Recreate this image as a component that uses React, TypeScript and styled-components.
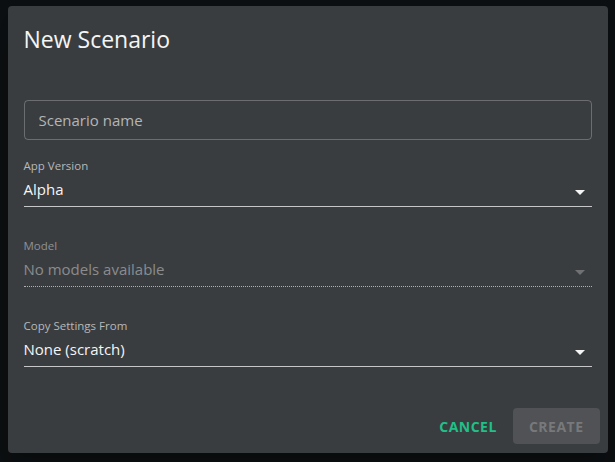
import styled, { createGlobalStyle } from "styled-components";

const GlobalStyle = createGlobalStyle`
  html, body {
    margin: 0;
    padding: 0;
    background: #0d1012;
    font-family: "Open Sans", "Liberation Sans", sans-serif;
  }
  * {
    box-sizing: border-box;
  }
`;

const Backdrop = styled.div`
  width: 100vw;
  height: 100vh;
  display: flex;
  justify-content: center;
  align-items: flex-start;
  padding-top: 6px;
  background: #0d1012;
`;

const Dialog = styled.div`
  width: 600px;
  height: 447px;
  display: flex;
  flex-direction: column;
  background: #3a3d40;
  border-radius: 4px;
  box-shadow: 0 11px 15px -7px rgba(0, 0, 0, 0.2),
    0 24px 38px 3px rgba(0, 0, 0, 0.14);
`;

const Title = styled.h2`
  margin: 0;
  padding: 17px 16px 0;
  font-size: 23px;
  line-height: 32px;
  font-weight: 400;
  color: #f4f5f5;
`;

const Content = styled.div`
  flex: 1;
  padding: 45px 16px 0;
  display: flex;
  flex-direction: column;
`;

const NameInput = styled.input`
  width: 100%;
  height: 40px;
  padding: 0 14px;
  background: transparent;
  border: 1px solid rgba(255, 255, 255, 0.25);
  border-radius: 4px;
  font-family: inherit;
  font-size: 15px;
  color: #f4f5f5;
  outline: none;
  &::placeholder {
    color: #b3b5b7;
    opacity: 1;
  }
`;

const Field = styled.div<{ $first?: boolean }>`
  display: flex;
  flex-direction: column;
  margin-top: ${(p) => (p.$first ? "18px" : "31px")};
`;

const Label = styled.label<{ $disabled?: boolean }>`
  font-size: 11.5px;
  line-height: 16px;
  color: ${(p) => (p.$disabled ? "#8f9193" : "#b6b8ba")};
`;

const SelectRow = styled.div<{ $disabled?: boolean }>`
  display: flex;
  align-items: center;
  justify-content: space-between;
  height: 33px;
  padding: 4px 0 5px;
  border-bottom: 1px ${(p) => (p.$disabled ? "dotted" : "solid")}
    ${(p) => (p.$disabled ? "rgba(255,255,255,0.6)" : "#c6c7c8")};
  font-size: 15px;
  line-height: 23px;
  color: ${(p) => (p.$disabled ? "#8a8c8e" : "#f4f5f5")};
  svg {
    flex: none;
    margin-top: 4px;
    fill: ${(p) => (p.$disabled ? "#6f7173" : "#f4f5f5")};
  }
`;

const Actions = styled.div`
  display: flex;
  justify-content: flex-end;
  align-items: center;
  gap: 8px;
  padding: 7px 8px 9px;
`;

const Button = styled.button<{ $variant: "text" | "contained" }>`
  height: 36px;
  padding: ${(p) => (p.$variant === "text" ? "6px 8px" : "6px 16px")};
  border: none;
  border-radius: 4px;
  font-family: inherit;
  font-size: 14px;
  font-weight: 700;
  letter-spacing: 0.5px;
  text-transform: uppercase;
  background: ${(p) => (p.$variant === "text" ? "transparent" : "#505255")};
  color: ${(p) => (p.$variant === "text" ? "#20c088" : "#77797b")};
  cursor: pointer;
`;

function ArrowDrop() {
  return (
    <svg width="24" height="24" viewBox="0 0 24 24">
      <path d="M7 10l5 5 5-5z" />
    </svg>
  );
}

function SelectField({
  label,
  value,
  disabled = false,
  first = false,
}: {
  label: string;
  value: string;
  disabled?: boolean;
  first?: boolean;
}) {
  return (
    <Field $first={first}>
      <Label $disabled={disabled}>{label}</Label>
      <SelectRow $disabled={disabled}>
        <span>{value}</span>
        <ArrowDrop />
      </SelectRow>
    </Field>
  );
}

export default function App() {
  return (
    <>
      <GlobalStyle />
      <Backdrop>
        <Dialog>
          <Title>New Scenario</Title>
          <Content>
            <NameInput placeholder="Scenario name" />
            <SelectField label="App Version" value="Alpha" first />
            <SelectField label="Model" value="No models available" disabled />
            <SelectField label="Copy Settings From" value="None (scratch)" />
          </Content>
          <Actions>
            <Button $variant="text">Cancel</Button>
            <Button $variant="contained" disabled>
              Create
            </Button>
          </Actions>
        </Dialog>
      </Backdrop>
    </>
  );
}
